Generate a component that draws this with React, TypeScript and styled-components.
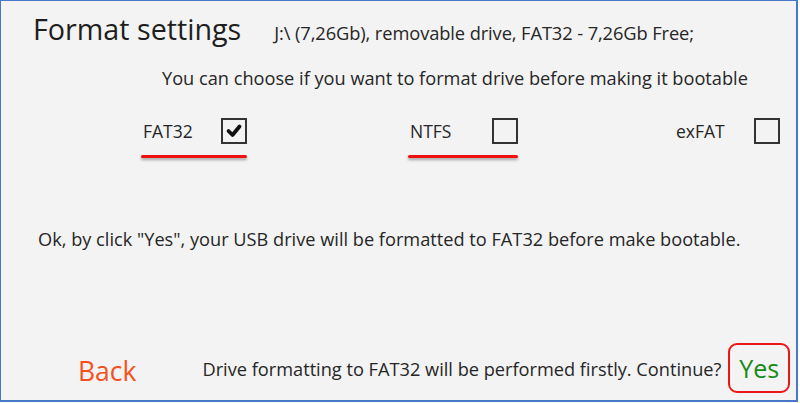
import React from "react";
import styled, { createGlobalStyle } from "styled-components";

const Global = createGlobalStyle`
  html, body { margin: 0; padding: 0; background: #ffffff; }
  body { font-family: "Open Sans", "Noto Sans", sans-serif; }
`;

const Frame = styled.div`
  box-sizing: border-box;
  width: 798px;
  height: 402px;
  background: #f3f3f3;
  border: 1.5px solid #4a78c8;
  border-right-width: 2px;
  border-bottom-width: 2px;
  display: flex;
  flex-direction: column;
  color: #262626;
  font-family: "Open Sans", "Noto Sans", sans-serif;
  overflow: hidden;
`;

const TitleRow = styled.div`
  display: flex;
  align-items: baseline;
  gap: 33px;
  padding: 10px 0 0 32px;
  height: 46px;
`;

const Title = styled.h1`
  margin: 0;
  font-weight: 400;
  font-size: 28.7px;
  line-height: 36px;
  color: #1e1e1e;
`;

const DriveInfo = styled.span`
  font-size: 18.3px;
  color: #262626;
  letter-spacing: -0.1px;
`;

const Line = styled.p<{ $pad: number; $top: number }>`
  margin: ${(p) => p.$top}px 0 0 ${(p) => p.$pad}px;
  font-size: 18.2px;
  line-height: 22px;
  color: #262626;
  white-space: nowrap;
`;

const Options = styled.div`
  display: flex;
  margin-top: 20px;
  height: 44px;
`;

const Option = styled.div<{ $w: number; $ml: number }>`
  position: relative;
  display: flex;
  align-items: center;
  width: ${(p) => p.$w}px;
  margin-left: ${(p) => p.$ml}px;
  height: 44px;
`;

const OptLabel = styled.span`
  font-size: 17.5px;
  margin-left: 2px;
  flex: 1;
  color: #262626;
`;

const Box = styled.span`
  box-sizing: border-box;
  width: 26px;
  height: 26px;
  border: 2px solid #333;
  display: flex;
  align-items: center;
  justify-content: center;
`;

const Underline = styled.span`
  position: absolute;
  left: 0;
  right: 0;
  bottom: -5px;
  height: 3px;
  border-radius: 2px;
  background: #ee1111;
  box-shadow: 0 2px 3px rgba(0, 0, 0, 0.35);
`;

const Spacer = styled.div`
  flex: 1;
`;

const Footer = styled.div`
  display: flex;
  align-items: center;
  padding: 0 6px 7px 77px;
  height: 50px;
`;

const BackButton = styled.span`
  font-size: 26.5px;
  color: #f4511e;
  margin: 5px 66px 0 0;
`;

const Question = styled.span`
  font-size: 18.2px;
  color: #262626;
  margin: 2px 7px 0 0;
  white-space: nowrap;
`;

const YesButton = styled.span`
  box-sizing: border-box;
  width: 63px;
  height: 50px;
  border: 2.5px solid #ee1515;
  border-radius: 9px;
  display: flex;
  align-items: center;
  justify-content: center;
  font-size: 25px;
  color: #178a17;
`;

const Check = () => (
  <svg width="18" height="18" viewBox="0 0 18 18">
    <path d="M3.5 9 L7.5 13 L14.5 4.5" fill="none" stroke="#111" strokeWidth="3.8" strokeLinecap="round" strokeLinejoin="round" />
  </svg>
);

export default function App() {
  return (
    <>
      <Global />
      <Frame>
        <TitleRow>
          <Title>Format settings</Title>
          <DriveInfo>J:\ (7,26Gb), removable drive, FAT32 - 7,26Gb Free;</DriveInfo>
        </TitleRow>
        <Line $pad={161} $top={10}>
          You can choose if you want to format drive before making it bootable
        </Line>
        <Options>
          <Option $w={106} $ml={140}>
            <OptLabel>FAT32</OptLabel>
            <Box>
              <Check />
            </Box>
            <Underline />
          </Option>
          <Option $w={110} $ml={161}>
            <OptLabel>NTFS</OptLabel>
            <Box />
            <Underline />
          </Option>
          <Option $w={106} $ml={156}>
            <OptLabel>exFAT</OptLabel>
            <Box />
          </Option>
        </Options>
        <Line $pad={37} $top={75}>
          Ok, by click "Yes", your USB drive will be formatted to FAT32 before make bootable.
        </Line>
        <Spacer />
        <Footer>
          <BackButton>Back</BackButton>
          <Question>Drive formatting to FAT32 will be performed firstly. Continue?</Question>
          <YesButton>Yes</YesButton>
        </Footer>
      </Frame>
    </>
  );
}
